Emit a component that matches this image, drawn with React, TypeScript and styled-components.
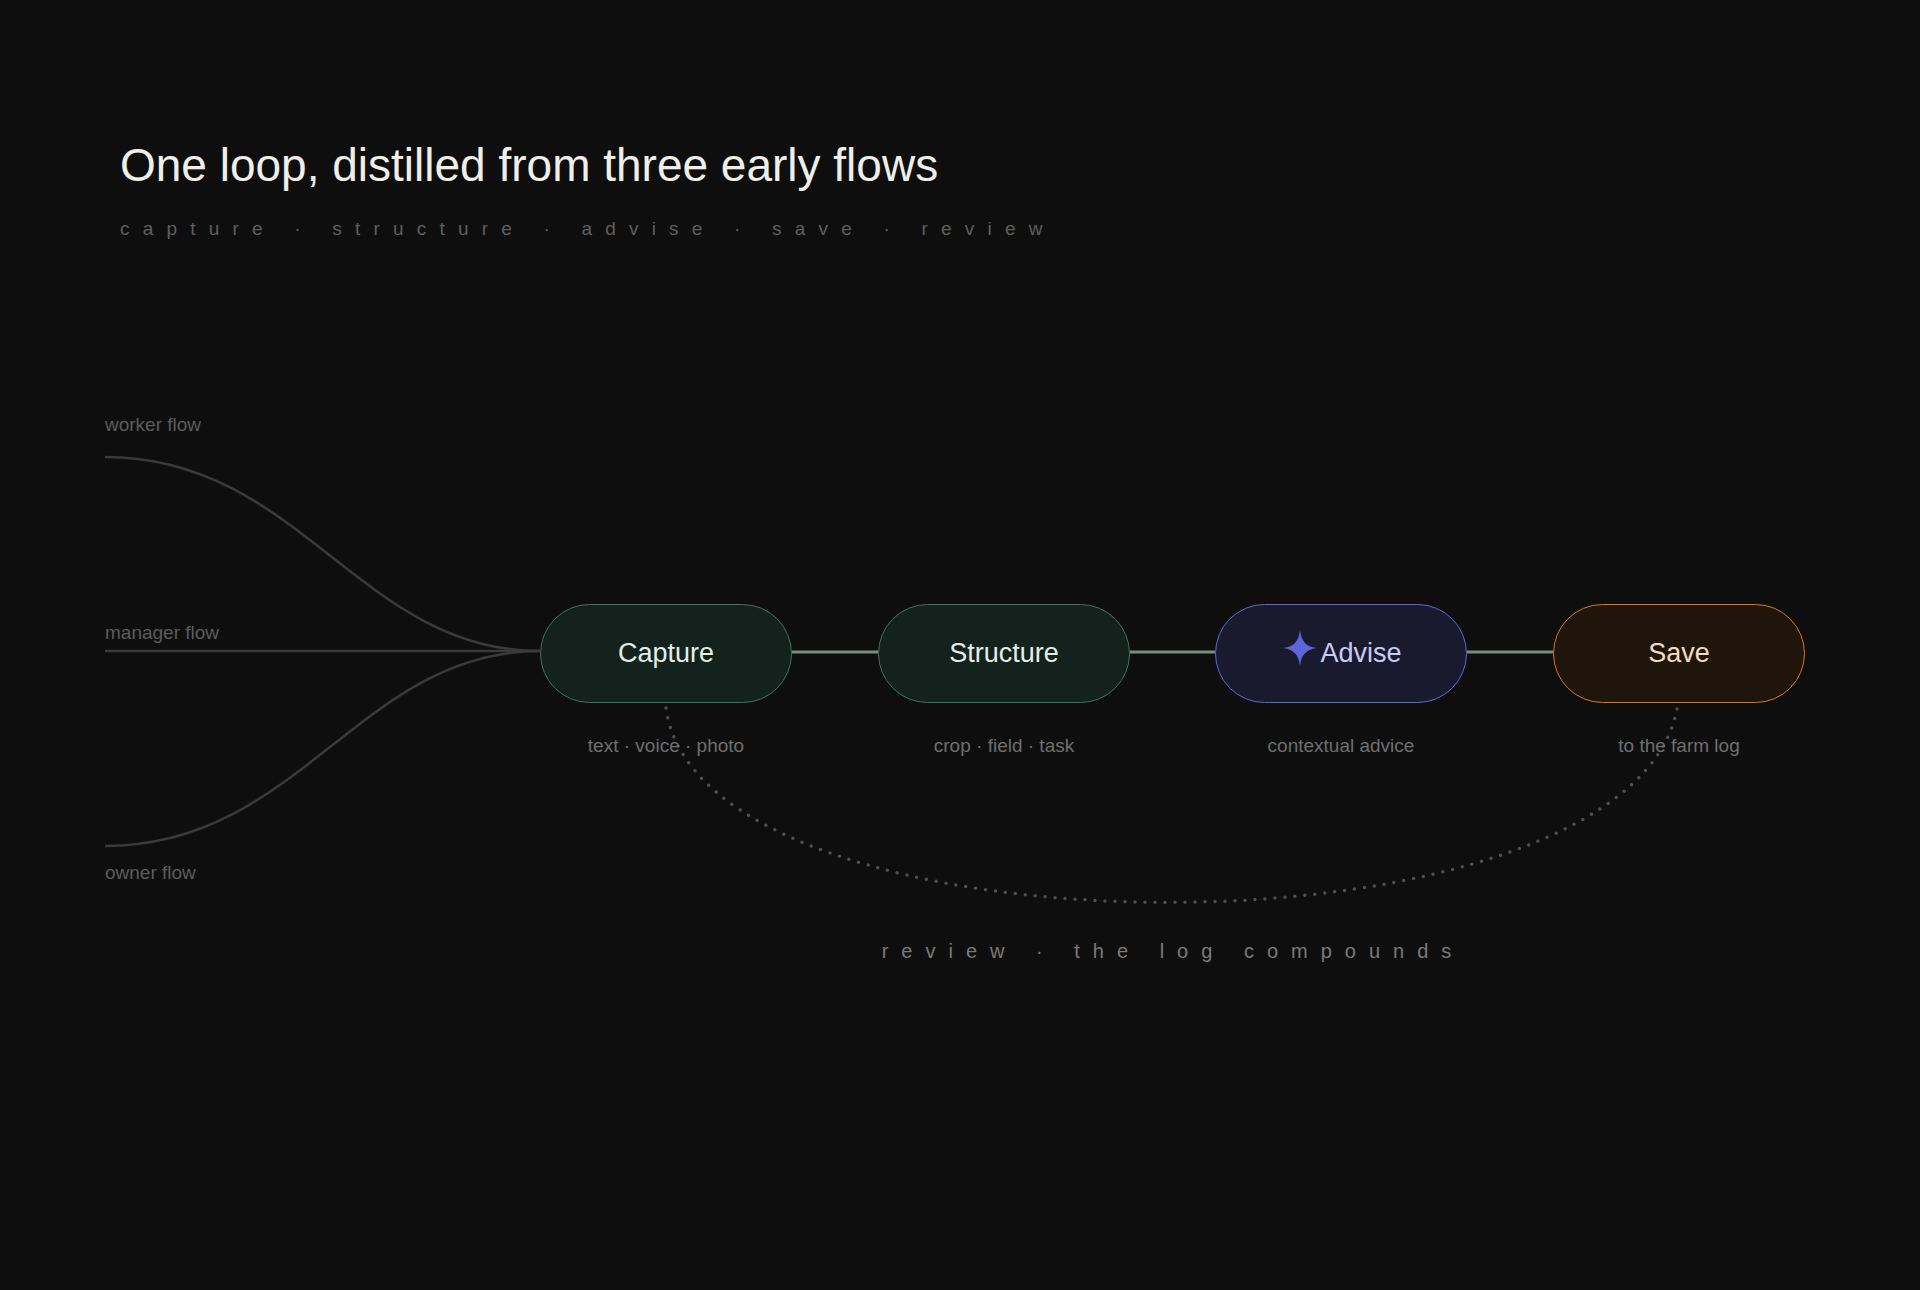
import React, { FunctionComponent } from 'react';
import styled, { createGlobalStyle } from 'styled-components';

type Tone = 'green' | 'indigo' | 'amber';

interface Step {
  label: string;
  caption: string;
  left: number;
  tone: Tone;
  star?: boolean;
}

const steps: Step[] = [
  { label: 'Capture', caption: 'text · voice · photo', left: 540, tone: 'green' },
  { label: 'Structure', caption: 'crop · field · task', left: 878, tone: 'green' },
  { label: 'Advise', caption: 'contextual advice', left: 1215, tone: 'indigo', star: true },
  { label: 'Save', caption: 'to the farm log', left: 1553, tone: 'amber' },
];

const tones: Record<Tone, { bg: string; border: string; text: string }> = {
  green: { bg: '#13221c', border: '#3d7359', text: '#e4ede7' },
  indigo: { bg: '#1a1a2e', border: '#5f66d6', text: '#c9cbf5' },
  amber: { bg: '#1f150b', border: '#d9771e', text: '#f3dcbf' },
};

const nodeWidth = 252;
const nodeHeight = 99;
const nodeTop = 598;

const GlobalStyle = createGlobalStyle`
  body {
    margin: 0;
    background: #0e0e0e;
    font-family: "Liberation Sans", Arial, sans-serif;
  }
`;

const Page = styled.div`
  width: 1920px;
  height: 1290px;
  overflow: hidden;
  background: #0e0e0e;
`;

const Header = styled.header`
  padding: 138px 0 0 120px;
`;

const Title = styled.h1`
  margin: 0;
  font-size: 46px;
  font-weight: 400;
  color: #f0eee8;
`;

const Subtitle = styled.div`
  margin-top: 26px;
  font-size: 19px;
  letter-spacing: 13.2px;
  color: #5e5e5e;
`;

const Canvas = styled.div`
  position: relative;
  height: 1000px;
  margin-top: -234px;
`;

const Wires = styled.svg`
  position: absolute;
  inset: 0;
`;

const FlowLabel = styled.div<{ $top: number }>`
  position: absolute;
  left: 105px;
  top: ${(p) => p.$top}px;
  font-size: 19px;
  color: #5c5c5c;
`;

const Node = styled.div<{ $tone: Tone }>`
  position: absolute;
  top: ${nodeTop}px;
  width: ${nodeWidth}px;
  height: ${nodeHeight}px;
  box-sizing: border-box;
  display: flex;
  align-items: center;
  justify-content: center;
  gap: 0;
  border-radius: ${nodeHeight / 2}px;
  border: 1.5px solid ${(p) => tones[p.$tone].border};
  background: ${(p) => tones[p.$tone].bg};
  color: ${(p) => tones[p.$tone].text};
  font-size: 27px;
`;

const Caption = styled.div`
  position: absolute;
  top: 729px;
  width: ${nodeWidth}px;
  text-align: center;
  font-size: 19px;
  color: #6e6e6e;
`;

const Review = styled.div`
  position: absolute;
  top: 934px;
  left: 0;
  width: 2346px;
  text-align: center;
  font-size: 20px;
  letter-spacing: 13px;
  color: #7a7a7a;
`;

const Star: FunctionComponent = () => (
  <svg width="40" height="40" viewBox="0 0 24 24" style={{ marginTop: -12 }}>
    <path
      d="M12 1 C12.8 8 15.5 11 22 12 C15.5 13 12.8 16 12 23 C11.2 16 8.5 13 2 12 C8.5 11 11.2 8 12 1 Z"
      fill="#5c66d8"
    />
  </svg>
);

const App: FunctionComponent = () => (
  <Page>
    <GlobalStyle />
    <Header>
      <Title>One loop, distilled from three early flows</Title>
      <Subtitle>capture · structure · advise · save · review</Subtitle>
    </Header>
    <Canvas>
      <Wires width="1920" height="1000">
        <g fill="none" stroke="#3a3a3a" strokeWidth="2.5">
          <path d="M105 451 C 300 451, 360 645, 540 645" />
          <path d="M105 645 L 540 645" />
          <path d="M105 840 C 300 840, 360 645, 540 645" />
        </g>
        <g stroke="#7f8a80" strokeWidth="3">
          <line x1="792" y1="646" x2="878" y2="646" />
          <line x1="1130" y1="646" x2="1215" y2="646" />
          <line x1="1467" y1="646" x2="1553" y2="646" />
        </g>
        <path
          d="M666 702 C 700 962, 1642 962, 1678 697"
          fill="none"
          stroke="#4c524f"
          strokeWidth="3.5"
          strokeLinecap="round"
          strokeDasharray="0 10"
        />
      </Wires>
      <FlowLabel $top={408}>worker flow</FlowLabel>
      <FlowLabel $top={616}>manager flow</FlowLabel>
      <FlowLabel $top={856}>owner flow</FlowLabel>
      {steps.map((s) => (
        <React.Fragment key={s.label}>
          <Node $tone={s.tone} style={{ left: s.left }}>
            {s.star && <Star />}
            {s.label}
          </Node>
          <Caption style={{ left: s.left }}>{s.caption}</Caption>
        </React.Fragment>
      ))}
      <Review>review · the log compounds</Review>
    </Canvas>
  </Page>
);

export default App;
